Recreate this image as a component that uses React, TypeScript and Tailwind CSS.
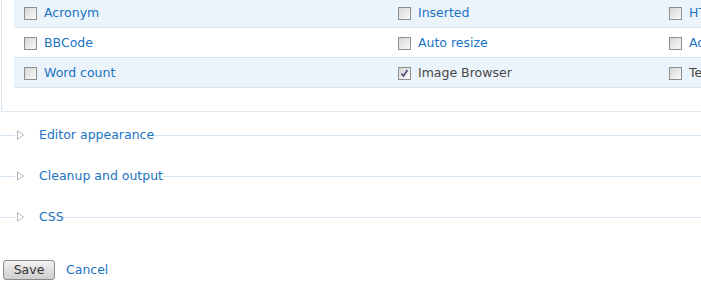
import React from "react";

type Item = { label: string; checked?: boolean; plain?: boolean };

const rows: Item[][] = [
  [{ label: "Acronym" }, { label: "Inserted" }, { label: "HTML block format" }],
  [{ label: "BBCode" }, { label: "Auto resize" }, { label: "Advanced image" }],
  [{ label: "Word count" }, { label: "Image Browser", checked: true, plain: true }, { label: "Teaser break", plain: true }],
];

function Box({ checked }: { checked?: boolean }) {
  return (
    <span className="relative inline-block w-[13px] h-[13px] shrink-0 border border-[#8e8f8f] bg-gradient-to-br from-[#d6d6d6] to-[#fbfbfb]">
      {checked && (
        <svg viewBox="0 0 11 11" className="absolute inset-0 w-[11px] h-[11px]">
          <path d="M2.5 5.5 L4.5 8 L8.5 2" stroke="#4b4b7c" strokeWidth="1.6" fill="none" />
        </svg>
      )}
    </span>
  );
}

function Collapsed({ title }: { title: string }) {
  return (
    <div className="flex items-center h-[20px] mt-[21px] first:mt-0">
      <div className="w-[15px] h-px bg-[#d6e5f1]" />
      <svg width="8" height="10" viewBox="0 0 8 10" className="ml-[2px]">
        <path d="M0.5 0.8 L6.5 5 L0.5 9.2 Z" fill="none" stroke="#b4b4b4" strokeWidth="1" />
      </svg>
      <span className="ml-[14px] text-[#1a73c4]">{title}</span>
      <div className="flex-1 h-px bg-[#d6e5f1]" />
    </div>
  );
}

export default function App() {
  return (
    <div className="w-[701px] h-[281px] overflow-hidden bg-white text-[12.5px] font-['DejaVu_Sans',Verdana,sans-serif]">
      {/* Buttons fieldset (open) */}
      <div className="w-[760px] ml-px border-l border-b border-[#dce8f2] pl-[12px] pb-[23px] -mt-[2px]">
        {rows.map((row, i) => (
          <div
            key={i}
            className={`flex h-[30px] border-b border-[#d3e5f3] ${i % 2 === 0 ? "bg-[#ecf4fb]" : "bg-white"}`}
          >
            {row.map((it, j) => (
              <div
                key={j}
                className={`flex items-center shrink-0 pl-[10px] pt-[1px] overflow-hidden ${j === 0 ? "w-[374px]" : j === 1 ? "w-[271px]" : "w-[100px]"}`}
              >
                <Box checked={it.checked} />
                <span className={`ml-[7px] pt-[1px] whitespace-nowrap ${it.plain ? "text-[#474747]" : "text-[#1a73c4]"}`}>
                  {it.label}
                </span>
              </div>
            ))}
          </div>
        ))}
      </div>

      {/* Collapsed fieldsets */}
      <div className="mt-[13px]">
        <Collapsed title="Editor appearance" />
        <Collapsed title="Cleanup and output" />
        <Collapsed title="CSS" />
      </div>

      <div className="flex items-center mt-[33px] pl-[3px]">
        <button className="w-[52px] h-[20px] rounded-[3px] border border-[#8b8b8b] bg-gradient-to-b from-[#f4f4f4] via-[#dedede] to-[#cfcfcf] text-[#333] text-[12.5px] leading-none">
          Save
        </button>
        <a className="ml-[11px] text-[#1a73c4]">Cancel</a>
      </div>
    </div>
  );
}
